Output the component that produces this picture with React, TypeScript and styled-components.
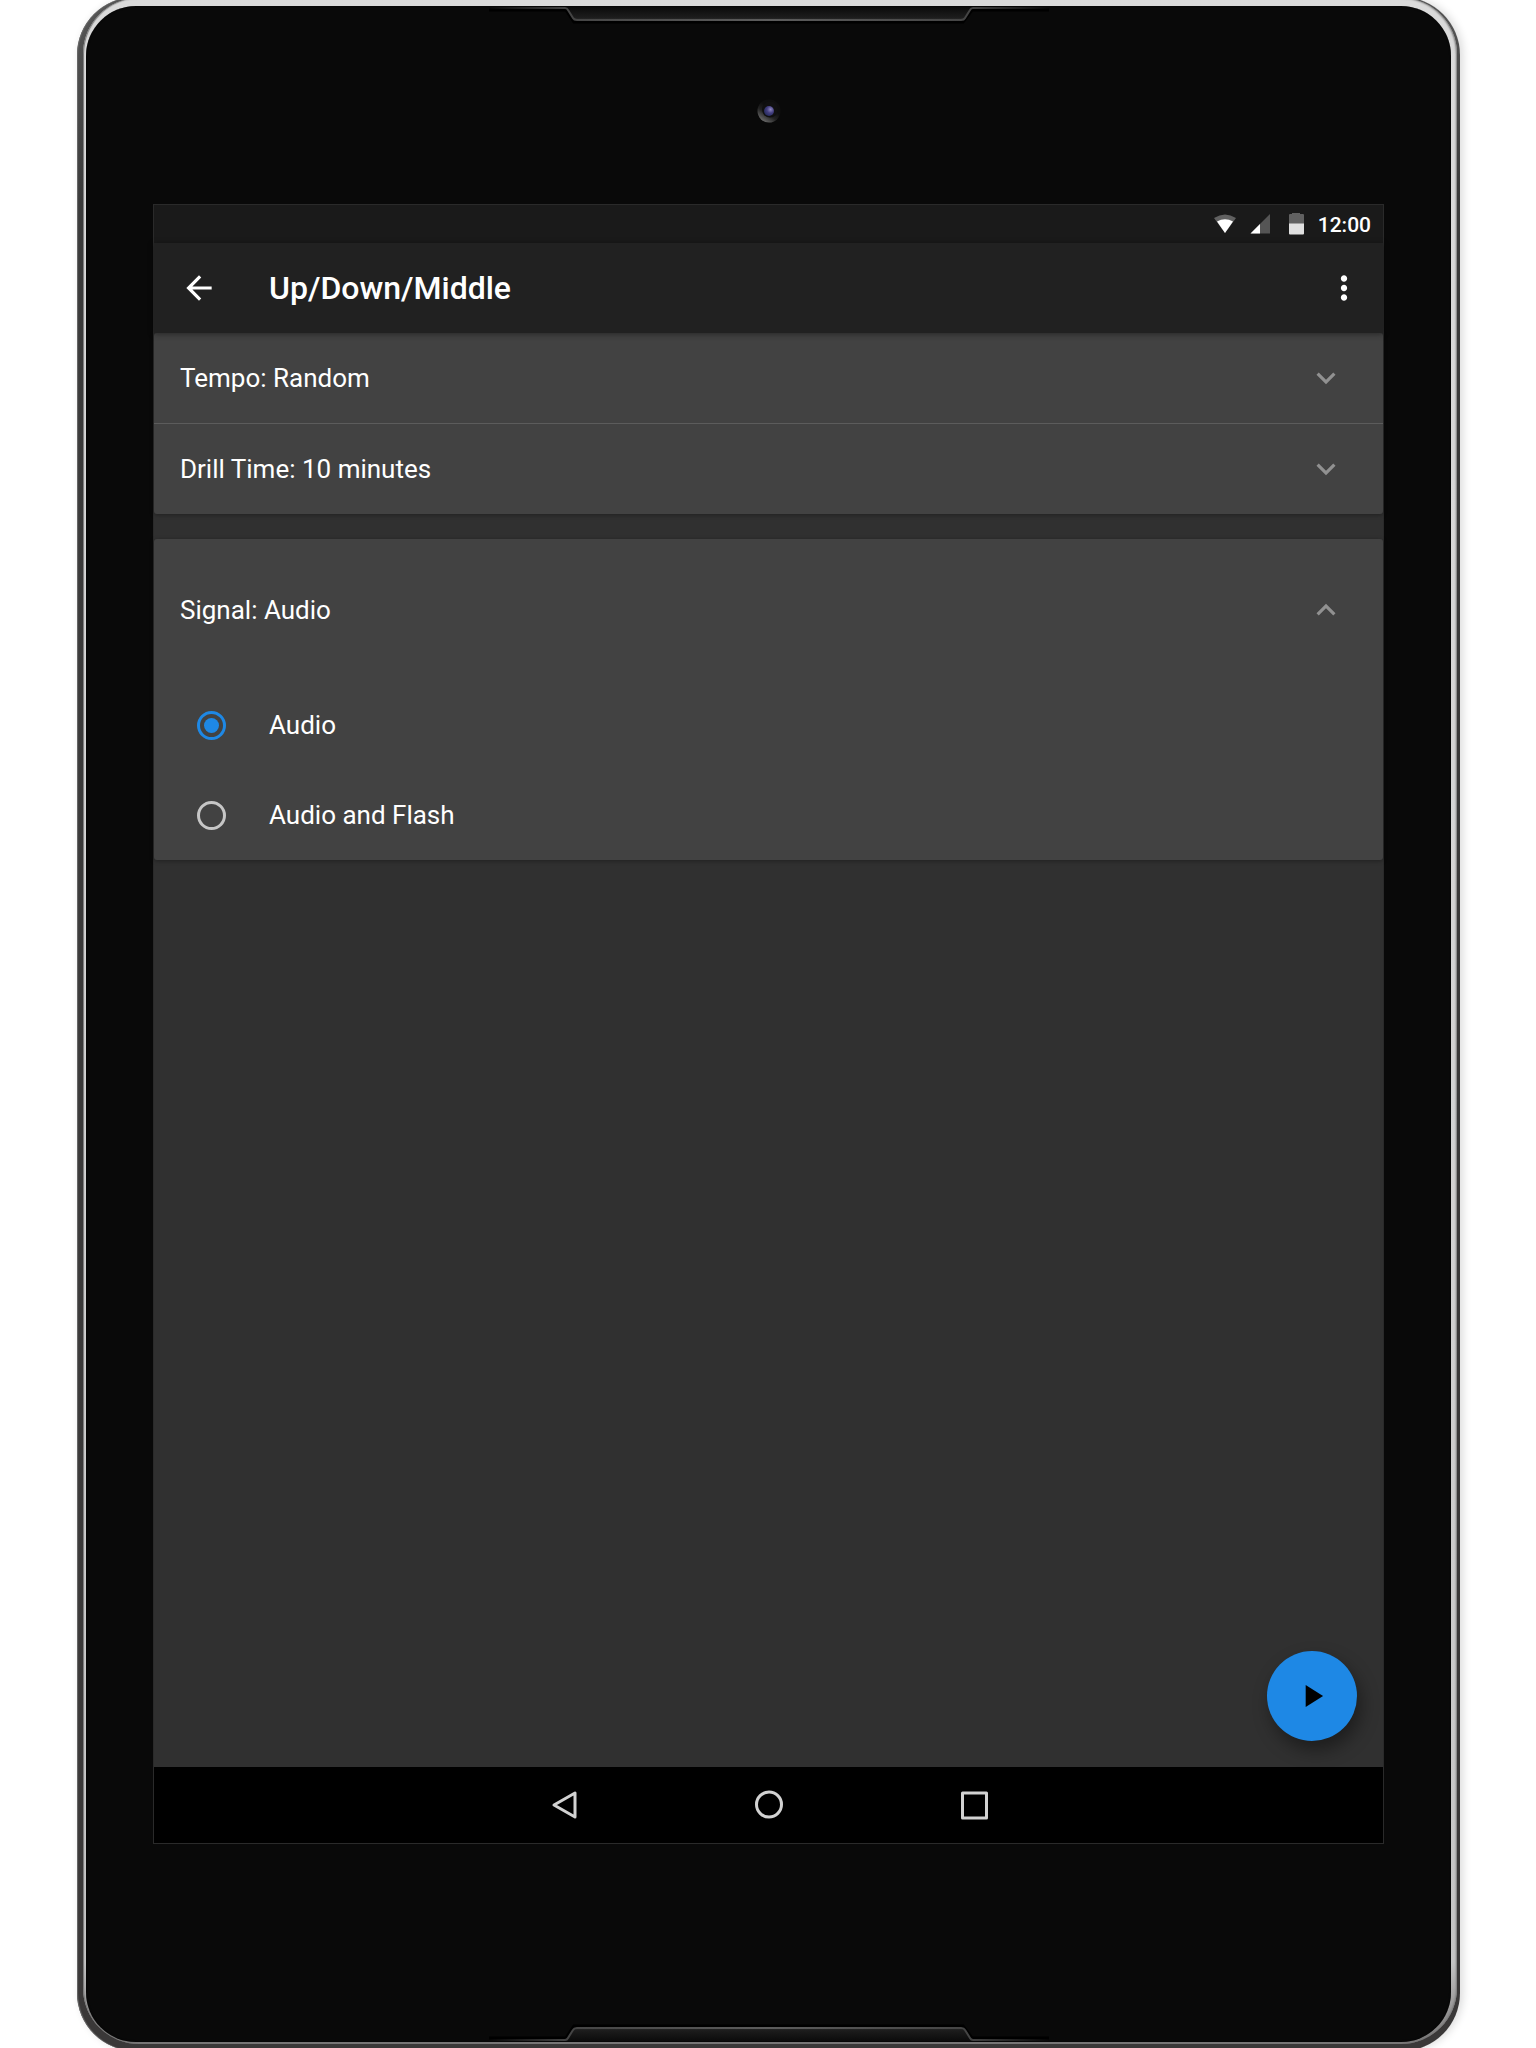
import React, { useState } from "react";
import styled, { createGlobalStyle } from "styled-components";

const GlobalStyle = createGlobalStyle`
  *, *::before, *::after { box-sizing: border-box; }
  body {
    margin: 0;
    background: #ffffff;
    font-family: Roboto, "Liberation Sans", sans-serif;
    color: #ffffff;
  }
  button {
    margin: 0;
    padding: 0;
    border: 0;
    background: none;
    color: inherit;
    font: inherit;
    cursor: pointer;
  }
  svg { display: block; }
`;

/* ---------- tablet body ---------- */

const Stage = styled.div`
  display: flex;
  height: 100vh;
  min-height: 900px;
  padding: 0 76px 0 77px;
  overflow: hidden;
`;

const Shell = styled.div`
  display: flex;
  flex: 1;
  min-width: 0;
  margin: -3px 0;
  padding: 1px 3px 7px 6px;
  border-radius: 58px;
  background: linear-gradient(#565656, #3a3a3a 10%, #3a3838);
  box-shadow: inset 1px 0 1px #6a6a6a, 3px 0 8px rgba(0, 0, 0, 0.14);
`;

const Rim = styled.div`
  display: flex;
  flex: 1;
  min-width: 0;
  padding: 8px 6px 2px 3px;
  border-radius: 56px;
  background: linear-gradient(#dadada, #d2d2d2 60%, #c4c4c4 96%, #777575);
  box-shadow: inset 1px 0 1px #777777, inset -1px 0 2px #777777;
`;

const Glass = styled.div`
  display: flex;
  flex: 1;
  min-width: 0;
  flex-direction: column;
  padding: 0 67px;
  border-radius: 50px;
  background: #090909;
  box-shadow: inset 0 0 2px #000000;
`;

const Forehead = styled.div`
  display: flex;
  flex: none;
  flex-direction: column;
  align-items: center;
  gap: 75px;
  height: 198px;
`;

const Chin = styled.div`
  display: flex;
  flex: none;
  align-items: flex-end;
  justify-content: center;
  height: 198px;
`;

const Screen = styled.div`
  display: flex;
  flex: 1;
  min-height: 0;
  flex-direction: column;
  border: 1px solid #2a2a2a;
  background: #303030;
`;

/* ---------- app ---------- */

const StatusBar = styled.div`
  display: flex;
  flex: none;
  align-items: center;
  justify-content: flex-end;
  height: 38px;
  padding: 2px 12px 0 0;
  background: #1a1a1a;
`;

const StatusIcons = styled.div`
  display: flex;
  align-items: center;
  margin-right: 14px;
`;

const Clock = styled.time`
  font-size: 21px;
  line-height: 26px;
  font-weight: 500;
`;

const AppBar = styled.header`
  position: relative;
  z-index: 1;
  display: flex;
  flex: none;
  align-items: center;
  height: 90px;
  padding: 0 20px 0 26px;
  background: #212121;
  box-shadow: 0 1px 6px rgba(0, 0, 0, 0.45);
`;

const IconButton = styled.button`
  display: grid;
  place-items: center;
  width: 38px;
  height: 38px;
`;

const Title = styled.h1`
  flex: 1;
  margin: 0 0 0 51px;
  font-size: 32px;
  line-height: 40px;
  font-weight: 500;
`;

const Content = styled.main`
  position: relative;
  display: flex;
  flex: 1;
  min-height: 0;
  flex-direction: column;
  gap: 25px;
`;

const Card = styled.section`
  border-radius: 3px;
  background: #424242;
  box-shadow: 0 1px 4px rgba(0, 0, 0, 0.35);
`;

const RowHeader = styled.button<{ $open?: boolean; $divided?: boolean }>`
  display: flex;
  align-items: center;
  justify-content: space-between;
  box-sizing: content-box;
  width: calc(100% - 64px);
  height: ${(p) => (p.$open ? 141 : 90)}px;
  padding: 0 38px 0 26px;
  border-bottom: ${(p) => (p.$divided ? "1px solid #5c5c5c" : "0")};
  font-size: 26px;
  line-height: 32px;
  text-align: left;

  svg {
    color: #919191;
    transform: ${(p) => (p.$open ? "rotate(180deg)" : "none")};
  }
`;

const Options = styled.fieldset`
  margin: 0;
  padding: 0;
  border: 0;
`;

const Option = styled.label`
  display: flex;
  align-items: center;
  gap: 43px;
  height: 90px;
  padding: 0 43px;
  font-size: 26px;
  line-height: 32px;
  cursor: pointer;
`;

const Radio = styled.input`
  appearance: none;
  display: grid;
  place-items: center;
  width: 29px;
  height: 29px;
  margin: 0;
  border: 3px solid #c6c6c6;
  border-radius: 50%;

  &:checked {
    border-color: #1e88e5;
  }
  &:checked::after {
    content: "";
    width: 15px;
    height: 15px;
    border-radius: 50%;
    background: #1e88e5;
  }
`;

const PlayButton = styled.button`
  position: absolute;
  right: 26px;
  bottom: 26px;
  display: grid;
  place-items: center;
  width: 90px;
  height: 90px;
  border-radius: 50%;
  background: #1e88e5;
  color: #000000;
  box-shadow: 4px 9px 18px rgba(0, 0, 0, 0.4);
`;

const NavBar = styled.nav`
  position: relative;
  z-index: 1;
  display: flex;
  flex: none;
  justify-content: center;
  height: 76px;
  background: #000000;
`;

const NavButton = styled.button`
  display: grid;
  place-items: center;
  width: 205px;
  color: #d2d2d2;
`;

/* ---------- drawings ---------- */

const Speaker = ({ id, flip }: { id: string; flip?: boolean }) => (
  <svg width="560" height="18" viewBox="0 0 560 18" aria-hidden="true">
    <defs>
      <linearGradient id={`${id}-fill`} x1="0" y1="0" x2="0" y2="1">
        <stop offset="0" stopColor="#0b0b0b" />
        <stop offset="0.8" stopColor="#1c1c1c" />
        <stop offset="1" stopColor="#2b2b2b" />
      </linearGradient>
      <linearGradient id={`${id}-edge`} gradientUnits="userSpaceOnUse" x1="0" y1="0" x2="560" y2="0">
        <stop offset="0" stopColor="#444" stopOpacity="0" />
        <stop offset="0.14" stopColor="#444" />
        <stop offset="0.5" stopColor="#5c5c5c" />
        <stop offset="0.86" stopColor="#444" />
        <stop offset="1" stopColor="#444" stopOpacity="0" />
      </linearGradient>
    </defs>
    <g transform={flip ? "matrix(1 0 0 -1 0 18)" : undefined}>
      <path d="M0 4H77L85 16H474L483 4H560" fill="none" stroke="#000" strokeWidth="3" />
      <path d="M78 1L86 14H474L482 1Z" fill={`url(#${id}-fill)`} />
      <path
        d="M0 2H76Q78 2 79 4L84 12Q85 14 88 14H472Q475 14 476 12L481 4Q482 2 484 2H560"
        fill="none"
        stroke={`url(#${id}-edge)`}
        strokeWidth="2"
      />
    </g>
  </svg>
);

const Camera = () => (
  <svg width="24" height="24" viewBox="0 0 24 24" aria-hidden="true">
    <defs>
      <linearGradient id="lens-ring" x1="0.2" y1="1" x2="0.6" y2="0.4">
        <stop offset="0" stopColor="#777" />
        <stop offset="0.6" stopColor="#222" />
        <stop offset="1" stopColor="#0e0e0e" />
      </linearGradient>
      <radialGradient id="lens" cx="0.65" cy="0.35" r="0.7">
        <stop offset="0" stopColor="#8d86bd" />
        <stop offset="0.5" stopColor="#443f80" />
        <stop offset="1" stopColor="#252b5c" />
      </radialGradient>
    </defs>
    <circle cx="12" cy="12" r="11.5" fill="url(#lens-ring)" />
    <circle cx="13" cy="10.5" r="8" fill="#101010" />
    <circle cx="12" cy="12" r="5" fill="url(#lens)" />
  </svg>
);

const StatusGlyphs = () => (
  <svg width="90" height="24" viewBox="0 0 90 24" aria-hidden="true">
    <path d="M0 5Q11-2 22 5L11 20Z" fill="#616161" />
    <path d="M3 8.5Q11 4 19 8.5L11 20Z" fill="#fff" />
    <path d="M56 1V20.5H36.500Z" fill="#555" />
    <path d="M46 11V20.500H36.500Z" fill="#fff" />
    <path d="M78 0H86V1H89Q90 1 90 2V11H75V2Q75 1 76 1H78Z" fill="#616161" />
    <path d="M75 10.500H90V20.500Q90 21.500 89 21.500H76Q75 21.500 75 20.500Z" fill="#e0e0e0" />
  </svg>
);

const Icon = ({ d }: { d: string }) => (
  <svg width="38" height="38" viewBox="0 0 24 24" fill="currentColor" aria-hidden="true">
    <path d={d} />
  </svg>
);

const ICONS = {
  back: "M20 11H7.830l5.590-5.590L12 4l-8 8 8 8 1.410-1.410L7.830 13H20v-2z",
  more: "M12 8c1.100 0 2-.9 2-2s-.9-2-2-2-2 .9-2 2 .9 2 2 2zm0 2c-1.100 0-2 .9-2 2s.9 2 2 2 2-.9 2-2-.9-2-2-2zm0 6c-1.100 0-2 .9-2 2s.9 2 2 2 2-.9 2-2-.9-2-2-2z",
  chevron: "M16.590 8.590L12 13.170 7.410 8.590 6 10l6 6 6-6z",
  play: "M8 5v14l11-7z",
};

const NavGlyph = ({ children }: { children: React.ReactNode }) => (
  <svg
    width="32"
    height="32"
    viewBox="0 0 32 32"
    fill="none"
    stroke="currentColor"
    strokeWidth="3"
    strokeLinejoin="round"
    aria-hidden="true"
  >
    {children}
  </svg>
);

const SIGNALS = ["Audio", "Audio and Flash"];

export default function App() {
  const [signal, setSignal] = useState(SIGNALS[0]);
  const [open, setOpen] = useState(true);

  return (
    <>
      <GlobalStyle />
      <Stage>
        <Shell>
          <Rim>
            <Glass>
              <Forehead>
                <Speaker id="top" />
                <Camera />
              </Forehead>
              <Screen>
                <StatusBar>
                  <StatusIcons>
                    <StatusGlyphs />
                  </StatusIcons>
                  <Clock>12:00</Clock>
                </StatusBar>
                <AppBar>
                  <IconButton aria-label="Back">
                    <Icon d={ICONS.back} />
                  </IconButton>
                  <Title>Up/Down/Middle</Title>
                  <IconButton aria-label="More options">
                    <Icon d={ICONS.more} />
                  </IconButton>
                </AppBar>
                <Content>
                  <Card>
                    <RowHeader $divided>
                      Tempo: Random
                      <Icon d={ICONS.chevron} />
                    </RowHeader>
                    <RowHeader>
                      Drill Time: 10 minutes
                      <Icon d={ICONS.chevron} />
                    </RowHeader>
                  </Card>
                  <Card>
                    <RowHeader $open={open} aria-expanded={open} onClick={() => setOpen(!open)}>
                      Signal: {signal}
                      <Icon d={ICONS.chevron} />
                    </RowHeader>
                    {open && (
                      <Options aria-label="Signal">
                        {SIGNALS.map((name) => (
                          <Option key={name}>
                            <Radio
                              type="radio"
                              name="signal"
                              checked={signal === name}
                              onChange={() => setSignal(name)}
                            />
                            {name}
                          </Option>
                        ))}
                      </Options>
                    )}
                  </Card>
                  <PlayButton aria-label="Start drill">
                    <Icon d={ICONS.play} />
                  </PlayButton>
                </Content>
                <NavBar>
                  <NavButton aria-label="Back">
                    <NavGlyph>
                      <path d="M27 4V28L6 16Z" />
                    </NavGlyph>
                  </NavButton>
                  <NavButton aria-label="Home">
                    <NavGlyph>
                      <circle cx="16" cy="15.500" r="12.500" />
                    </NavGlyph>
                  </NavButton>
                  <NavButton aria-label="Recent apps">
                    <NavGlyph>
                      <rect x="4.500" y="4" width="24" height="25" />
                    </NavGlyph>
                  </NavButton>
                </NavBar>
              </Screen>
              <Chin>
                <Speaker id="bottom" flip />
              </Chin>
            </Glass>
          </Rim>
        </Shell>
      </Stage>
    </>
  );
}
